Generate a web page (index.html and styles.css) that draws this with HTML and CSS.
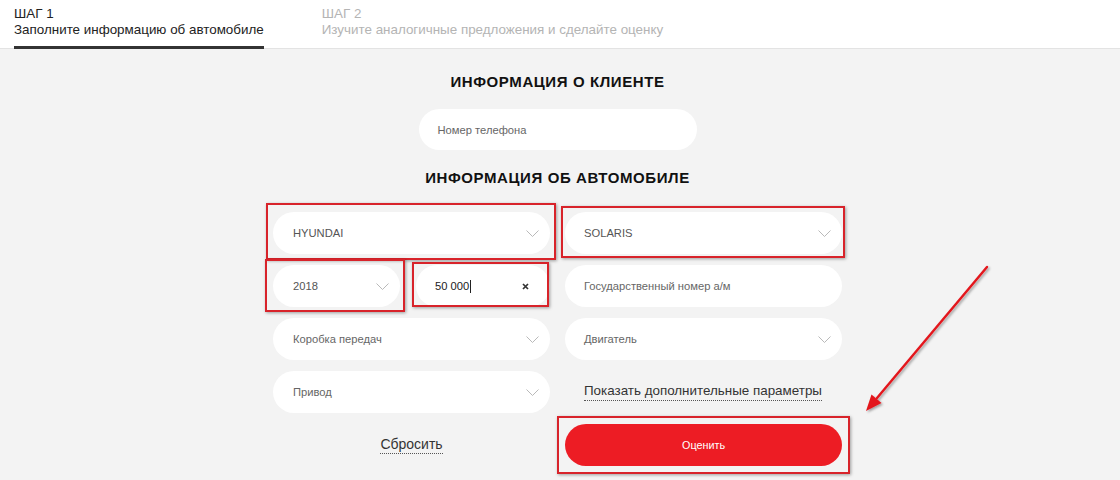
FILE: index.html
```html
<!DOCTYPE html>
<html lang="ru">
<head>
<meta charset="utf-8">
<title>Оценка автомобиля</title>
<link rel="stylesheet" href="styles.css">
</head>
<body>
<header class="steps">
  <div class="step step-active">
    <div class="step-num">ШАГ 1</div>
    <div class="step-title">Заполните информацию об автомобиле</div>
  </div>
  <div class="step">
    <div class="step-num">ШАГ 2</div>
    <div class="step-title">Изучите аналогичные предложения и сделайте оценку</div>
  </div>
</header>

<main class="page">
  <div class="form">
    <h2 class="section-title">ИНФОРМАЦИЯ О КЛИЕНТЕ</h2>
    <div class="field field-phone"><span class="placeholder">Номер телефона</span></div>

    <h2 class="section-title section-title-car">ИНФОРМАЦИЯ ОБ АВТОМОБИЛЕ</h2>

    <div class="grid">
      <div class="field select"><span class="value">HYUNDAI</span><svg class="chev" width="13" height="7" viewBox="0 0 13 7"><polyline points="0.5,0.5 6.5,6.5 12.5,0.5"/></svg></div>
      <div class="field select"><span class="value">SOLARIS</span><svg class="chev" width="13" height="7" viewBox="0 0 13 7"><polyline points="0.5,0.5 6.5,6.5 12.5,0.5"/></svg></div>

      <div class="pair">
        <div class="field select"><span class="value">2018</span><svg class="chev" width="13" height="7" viewBox="0 0 13 7"><polyline points="0.5,0.5 6.5,6.5 12.5,0.5"/></svg></div>
        <div class="field input-filled"><span class="typed">50 000<span class="caret"></span></span><svg class="clear" width="7" height="7" viewBox="0 0 7 7"><path d="M1 1L6 6M6 1L1 6"/></svg></div>
      </div>
      <div class="field"><span class="placeholder">Государственный номер а/м</span></div>

      <div class="field select"><span class="placeholder">Коробка передач</span><svg class="chev" width="13" height="7" viewBox="0 0 13 7"><polyline points="0.5,0.5 6.5,6.5 12.5,0.5"/></svg></div>
      <div class="field select"><span class="placeholder">Двигатель</span><svg class="chev" width="13" height="7" viewBox="0 0 13 7"><polyline points="0.5,0.5 6.5,6.5 12.5,0.5"/></svg></div>

      <div class="field select"><span class="placeholder">Привод</span><svg class="chev" width="13" height="7" viewBox="0 0 13 7"><polyline points="0.5,0.5 6.5,6.5 12.5,0.5"/></svg></div>
      <div class="more"><span class="dotted-link">Показать дополнительные параметры</span></div>

      <div class="reset"><span class="dotted-link">Сбросить</span></div>
      <div class="submit-cell"><button class="submit">Оценить</button></div>

      <div class="mark mark-make"></div>
      <div class="mark mark-model"></div>
      <div class="mark mark-year"></div>
      <div class="mark mark-mileage"></div>
      <div class="mark mark-submit"></div>
    </div>
  </div>
</main>

<svg class="arrow" width="1120" height="480" viewBox="0 0 1120 480">
  <defs>
    <filter id="sh" x="-20%" y="-20%" width="140%" height="140%">
      <feDropShadow dx="1.5" dy="1.5" stdDeviation="1.2" flood-color="#000" flood-opacity="0.35"/>
    </filter>
  </defs>
  <g filter="url(#sh)">
    <line x1="987" y1="267" x2="877" y2="398" stroke="#e3151c" stroke-width="2.4" stroke-linecap="round"/>
    <polygon points="866,411 881.5,403 871.5,394.5" fill="#e3151c"/>
  </g>
</svg>
</body>
</html>
```

FILE: styles.css
```css
html, body {
  margin: 0;
  padding: 0;
}
body {
  width: 1120px;
  height: 480px;
  overflow: hidden;
  background: #f3f3f3;
  font-family: "Liberation Sans", Arial, sans-serif;
  color: #333;
  position: relative;
}

/* steps header */
.steps {
  display: flex;
  gap: 58px;
  height: 49px;
  box-sizing: border-box;
  padding-left: 14px;
  background: #fff;
  border-bottom: 1px solid #e3e3e3;
}
.step {
  height: 49px;
  box-sizing: border-box;
  padding-top: 6px;
  border-bottom: 3px solid transparent;
  font-size: 13.4px;
  line-height: 16px;
  color: #b4b4b4;
}
.step-active {
  color: #222;
  border-bottom-color: #333;
}

/* page */
.page {
  padding-right: 5px;
}
.form {
  width: 569px;
  margin: 0 auto;
  display: flex;
  flex-direction: column;
  align-items: center;
  padding-top: 24px;
}
.section-title {
  margin: 0;
  font-size: 15px;
  line-height: 18px;
  font-weight: bold;
  letter-spacing: 0.6px;
  color: #111;
}
.section-title-car {
  margin-top: 19px;
}

.field {
  height: 42px;
  box-sizing: border-box;
  background: #fff;
  border-radius: 21px;
  display: flex;
  align-items: center;
  justify-content: space-between;
  padding: 0 11px 0 20px;
  font-size: 11.2px;
  color: #555;
}
.field-phone {
  width: 278px;
  height: 41px;
  margin-top: 18px;
  padding-left: 19px;
}
.placeholder {
  color: #666;
}
.value {
  color: #555;
}
.chev {
  fill: none;
  stroke: #b9b9b9;
  stroke-width: 1;
  flex: none;
}

.grid {
  position: relative;
  width: 569px;
  margin-top: 25px;
  display: grid;
  grid-template-columns: 277px 277px;
  grid-auto-rows: 42px;
  column-gap: 15px;
  row-gap: 11px;
}
.grid > .field:nth-child(even),
.grid > .field:nth-child(4) {
  padding-left: 19px;
}
.pair {
  display: grid;
  grid-template-columns: 127px 134px;
  column-gap: 16px;
}
.input-filled {
  padding-left: 19px;
  padding-right: 21px;
}
.typed {
  color: #222;
  display: flex;
  align-items: center;
}
.caret {
  display: inline-block;
  width: 1px;
  height: 13px;
  background: #222;
  margin-left: 1px;
}
.clear {
  fill: none;
  stroke: #333;
  stroke-width: 1.7;
}

.more {
  display: flex;
  align-items: center;
  padding-left: 19px;
  font-size: 13.4px;
  color: #333;
}
.dotted-link {
  border-bottom: 1px dotted #555;
  padding-bottom: 1px;
  line-height: 16px;
}
.reset {
  display: flex;
  align-items: center;
  justify-content: center;
  font-size: 14px;
  color: #333;
}
.submit-cell {
  display: flex;
}
.submit {
  width: 100%;
  height: 42px;
  border: 0;
  border-radius: 21px;
  background: #ed1c24;
  color: #fff;
  font-family: "Liberation Sans", Arial, sans-serif;
  font-size: 10.8px;
  padding: 0;
}

/* red annotation frames */
.mark {
  position: absolute;
  border: 2px solid #d8232a;
  box-shadow: 1px 1px 3px rgba(0, 0, 0, 0.35);
  box-sizing: border-box;
  pointer-events: none;
}
.mark-make { left: -7px; top: -9px; width: 290px; height: 57px; }
.mark-model { left: 288px; top: -6px; width: 284px; height: 52px; }
.mark-year { left: -8px; top: 47px; width: 140px; height: 53px; }
.mark-mileage { left: 139px; top: 50px; width: 137px; height: 45px; }
.mark-submit { left: 284px; top: 204px; width: 293px; height: 58px; }

.arrow {
  position: absolute;
  left: 0;
  top: 0;
  pointer-events: none;
}
```
